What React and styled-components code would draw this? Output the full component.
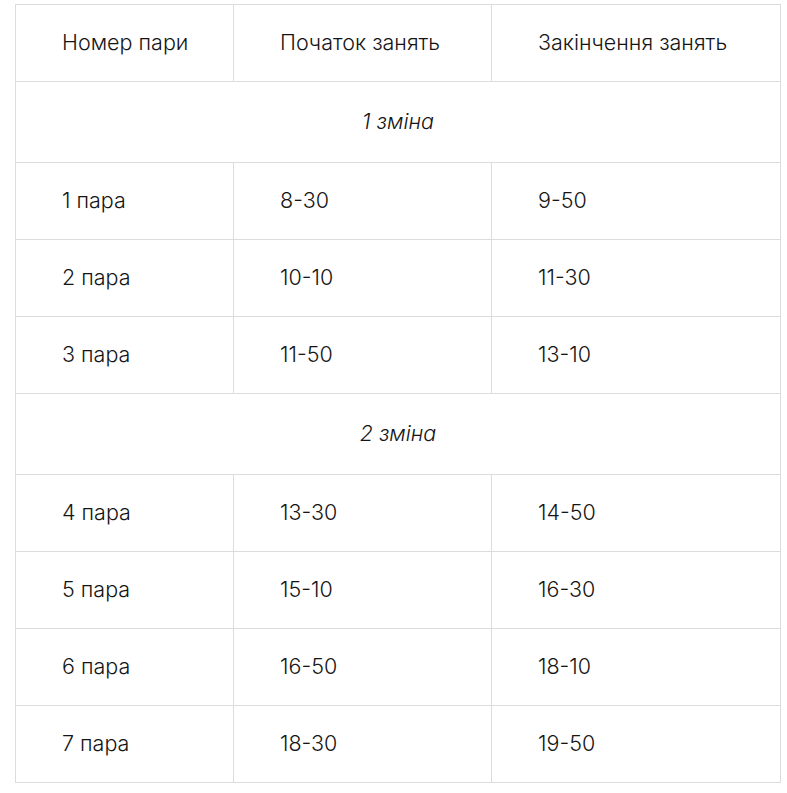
import React from 'react';
import styled, { createGlobalStyle } from 'styled-components';

const Global = createGlobalStyle`
    body {
        margin: 0;
        background: #fff;
        font-family: Inter, "Noto Sans", sans-serif;
    }
`

const Wrapper = styled.div`
    padding: 4px 7px 0 15px;
`

const Table = styled.table`
    border-collapse: collapse;
    color: #151515;
    font-size: 21.5px;
    font-weight: 300;
    table-layout: fixed;
    width: 765px;
`

const Cell = styled.td`
    border: 1px solid #dcdcdc;
    height: 74px;
    padding: 0 0 2px 46px;
    vertical-align: middle;
`

const Shift = styled.td`
    border: 1px solid #dcdcdc;
    font-style: italic;
    height: 78px;
    padding: 0 0 2px;
    text-align: center;
`

const shifts = [
    { title: '1 зміна', rows: [['1 пара', '8-30', '9-50'], ['2 пара', '10-10', '11-30'], ['3 пара', '11-50', '13-10']] },
    { title: '2 зміна', rows: [['4 пара', '13-30', '14-50'], ['5 пара', '15-10', '16-30'], ['6 пара', '16-50', '18-10'], ['7 пара', '18-30', '19-50']] },
]

export default function App() {
    return (
        <Wrapper>
            <Global/>
            <Table>
                <colgroup>
                    <col style={{ width: 218 }}/>
                    <col style={{ width: 258 }}/>
                    <col style={{ width: 289 }}/>
                </colgroup>
                <tbody>
                    <tr>
                        <Cell>Номер пари</Cell>
                        <Cell>Початок занять</Cell>
                        <Cell>Закінчення занять</Cell>
                    </tr>
                    {shifts.map(s => (
                        <React.Fragment key={s.title}>
                            <tr><Shift colSpan={3}>{s.title}</Shift></tr>
                            {s.rows.map(r => (
                                <tr key={r[0]}>
                                    {r.map(v => <Cell key={v}>{v}</Cell>)}
                                </tr>
                            ))}
                        </React.Fragment>
                    ))}
                </tbody>
            </Table>
        </Wrapper>
    )
}
